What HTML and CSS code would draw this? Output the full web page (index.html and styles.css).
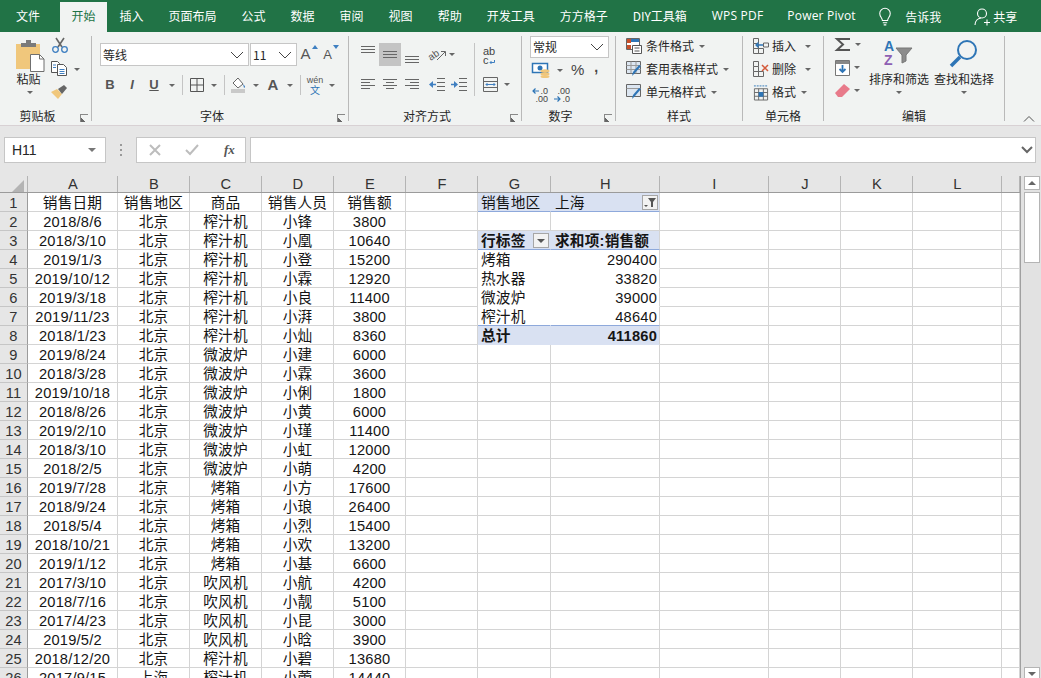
FILE: index.html
```html
<!DOCTYPE html>
<html lang="zh-CN">
<head>
<meta charset="utf-8">
<title>Excel</title>
<link rel="stylesheet" href="styles.css">
</head>
<body>
<header class="tabs">
  <span class="tab tab-file">文件</span>
  <span class="tab tab-on">开始</span>
  <span class="tab">插入</span>
  <span class="tab">页面布局</span>
  <span class="tab">公式</span>
  <span class="tab">数据</span>
  <span class="tab">审阅</span>
  <span class="tab">视图</span>
  <span class="tab">帮助</span>
  <span class="tab">开发工具</span>
  <span class="tab">方方格子</span>
  <span class="tab">DIY工具箱</span>
  <span class="tab tab-latin">WPS PDF</span>
  <span class="tab tab-latin">Power Pivot</span>
  <span class="tell">
    <svg width="14" height="20" viewBox="0 0 16 22" fill="none" stroke="#fff" stroke-width="1.2"><path d="M5 15c0-3-3-4-3-8a6 6 0 0 1 12 0c0 4-3 5-3 8z"/><path d="M5.500 17.500h5M6.500 20h3"/></svg>
    <span>告诉我</span>
  </span>
  <span class="share">
    <svg width="16" height="18" viewBox="0 0 16 18" fill="none" stroke="#fff" stroke-width="1.1"><circle cx="8" cy="5.500" r="4.500"/><path d="M1 17c0-4 3-6.500 6-7M10 14.500h6M13 11.500v6"/></svg>
    <span>共享</span>
  </span>
</header>

<section class="ribbon">
  <div class="group g-clip">
    <div class="body clip-body">
      <div class="paste">
        <svg width="30" height="32" viewBox="0 0 30 32"><rect x="1" y="4" width="24" height="25" fill="#f0c77c"/><path d="M6 7V3h5V0h5v3h5v4z" fill="#7a7a7a"/><path d="M15.500 14.500h9l4.500 4.500v12.500H15.500z" fill="#fff" stroke="#6f6f6f"/><path d="M24.500 14.500v4.500H29" fill="none" stroke="#6f6f6f"/></svg>
        <span class="txt">粘贴</span>
        <i class="caret paste-caret"></i>
      </div>
      <div class="clip-tools">
        <svg width="18" height="15" viewBox="0 0 18 15" fill="none"><path d="M5 0l6 9M13 0L7 9" stroke="#666" stroke-width="1.600"/><circle cx="4.500" cy="11.500" r="2.800" stroke="#3f7fc1" stroke-width="1.300"/><circle cx="13.500" cy="11.500" r="2.800" stroke="#3f7fc1" stroke-width="1.300"/></svg>
        <span class="row-ic">
          <svg width="16" height="15" viewBox="0 0 16 15" fill="none" stroke="#555"><path d="M.5.500h6l2 2v9H.5z" fill="#fff"/><path d="M6.500 3.500h6l3 3v8h-9z" fill="#fff"/><path d="M2 4h3M2 6.500h3M8.500 8.500h5M8.500 10.500h5M8.500 12.500h5" stroke="#3f7fc1"/></svg>
          <i class="caret copy-caret"></i>
        </span>
        <svg width="18" height="15" viewBox="0 0 18 15"><path d="M0 8l6-3 5 5-4 5z" fill="#f0c77c"/><path d="M7 5l6-4 3 3-5 6z" fill="#666"/></svg>
      </div>
    </div>
    <div class="label label-l">剪贴板</div>
    <i class="launch"></i>
  </div>

  <div class="group g-font">
    <div class="body pad-7">
      <div class="r r-font">
        <span class="combo combo-font"><span>等线</span><svg class="chev" width="14" height="8" viewBox="0 0 14 8" fill="none" stroke="#444"><path d="M1 1l6 6 6-6"/></svg></span>
        <span class="combo combo-size"><span>11</span><svg class="chev" width="14" height="8" viewBox="0 0 14 8" fill="none" stroke="#444"><path d="M1 1l6 6 6-6"/></svg></span>
        <span class="grow-a">A<svg width="6" height="4" viewBox="0 0 6 4"><path d="M0 4l3-4 3 4z" fill="#3f7fc1"/></svg></span>
        <span class="grow-a small">A<svg width="6" height="4" viewBox="0 0 6 4"><path d="M0 0l3 4 3-4z" fill="#3f7fc1"/></svg></span>
      </div>
      <div class="r r-fmt">
        <b class="t22 fmt">B</b><i class="t22 fmt fmt-i">I</i><u class="t22 fmt">U</u>
        <span class="cw13"><i class="caret"></i></span><i class="sep"></i>
        <span class="t22"><svg width="14" height="14" viewBox="0 0 14 14" fill="none" stroke="#555"><path d="M.5.500h13v13H.5zM7 .500v13M.5 7h13"/></svg></span>
        <span class="cw12"><i class="caret"></i></span><i class="sep"></i>
        <span class="t22"><svg width="18" height="18" viewBox="0 0 18 18"><rect x="1" y="13" width="14" height="4" fill="#c9c9c9"/><path d="M3 7l5-5 5 6-5 4z" fill="#fff" stroke="#666"/><path d="M13 8c2 2 3 3 1 4z" fill="#3f7fc1"/></svg></span>
        <span class="cw12"><i class="caret"></i></span>
        <span class="t22 color-a">A</span>
        <span class="cw12"><i class="caret"></i></span><i class="sep"></i>
        <span class="t22 wen"><small>wén</small><em>文</em></span>
        <span class="cw12"><i class="caret"></i></span>
      </div>
    </div>
    <div class="label label-l">字体</div>
    <i class="launch"></i>
  </div>

  <div class="group g-align">
    <div class="body pad-7 align-body">
      <div class="align-main">
        <div class="r r-a1">
          <span class="t22 at"><svg width="14" height="7" viewBox="0 0 14 7" stroke="#666"><path d="M0 .500h14M0 3.500h14M0 6.500h14"/></svg></span>
          <span class="t22 ac sel"><svg width="14" height="7" viewBox="0 0 14 7" stroke="#666"><path d="M0 .500h14M0 3.500h14M0 6.500h14"/></svg></span>
          <span class="t22 ab"><svg width="14" height="7" viewBox="0 0 14 7" stroke="#666"><path d="M0 .500h14M0 3.500h14M0 6.500h14"/></svg></span>
          <span class="orient"><svg width="18" height="15" viewBox="0 0 18 15" fill="none" stroke="#555"><text class="orient-t" x="0" y="12" transform="rotate(-35 4 10)">ab</text><path d="M8 13l8-8M12 4.500h4.500V9" stroke="#666"/></svg><i class="caret"></i></span>
        </div>
        <div class="r r-a2">
          <span class="t22"><svg width="14" height="11" viewBox="0 0 14 11" stroke="#666"><path d="M0 .500h14M0 3.500h9M0 6.500h14M0 9.500h9"/></svg></span>
          <span class="t22"><svg width="14" height="11" viewBox="0 0 14 11" stroke="#666"><path d="M0 .500h14M3 3.500h8M0 6.500h14M3 9.500h8"/></svg></span>
          <span class="t22"><svg width="14" height="11" viewBox="0 0 14 11" stroke="#666"><path d="M0 .500h14M5 3.500h9M0 6.500h14M5 9.500h9"/></svg></span>
          <span class="indent"><svg width="16" height="13" viewBox="0 0 16 13" fill="none"><path d="M0 6.500l4-3.500v7z" fill="#3f7fc1"/><path d="M4 6.500h3" stroke="#3f7fc1" stroke-width="1.500"/><path d="M8 .500h8M8 4.500h8M8 8.500h8M8 12.500h8" stroke="#666"/></svg></span>
          <span class="indent"><svg width="16" height="13" viewBox="0 0 16 13" fill="none"><path d="M7 6.500L3 3v7z" fill="#3f7fc1"/><path d="M0 6.500h3" stroke="#3f7fc1" stroke-width="1.500"/><path d="M8 .500h8M8 4.500h8M8 8.500h8M8 12.500h8" stroke="#666"/></svg></span>
        </div>
      </div>
      <i class="sep sep-tall"></i>
      <div class="align-side">
        <span class="wrap-ic"><span>ab</span><span>c<svg width="6" height="5" viewBox="0 0 6 5" fill="none" stroke="#3f7fc1"><path d="M5.500 0v2.500H1M2.500 1L1 2.500 2.500 4"/></svg></span></span>
        <span class="merge"><svg width="15" height="15" viewBox="0 0 15 15" fill="none" stroke="#666"><path d="M.5.500h14v14H.5zM.5 4.500h14M.5 10.500h14"/><path d="M3 7.500h9M4.500 6l-1.500 1.500L4.500 9M10.500 6L12 7.500 10.500 9" stroke="#3f7fc1"/></svg><i class="caret"></i></span>
      </div>
    </div>
    <div class="label label-l">对齐方式</div>
    <i class="launch"></i>
  </div>

  <div class="group g-num">
    <div class="body">
      <span class="combo combo-num"><span>常规</span><svg class="chev" width="14" height="8" viewBox="0 0 14 8" fill="none" stroke="#444"><path d="M1 1l6 6 6-6"/></svg></span>
      <div class="r r-n2">
        <svg width="18" height="15" viewBox="0 0 18 15"><rect x=".5" y=".5" width="15" height="9" fill="#fff" stroke="#2e75b6" stroke-width="1.500"/><circle cx="8" cy="5" r="2.500" fill="#2e75b6"/><ellipse cx="13" cy="8" rx="4.500" ry="1.700" fill="#f0c77c"/><ellipse cx="13" cy="11" rx="4.500" ry="1.700" fill="#f0c77c"/><ellipse cx="13" cy="13.500" rx="4.500" ry="1.500" fill="#f0c77c"/></svg>
        <i class="caret n-caret"></i>
        <span class="pct">%</span>
        <span class="comma">,</span>
      </div>
      <div class="r r-n3">
        <span class="dec"><span><svg width="7" height="6" viewBox="0 0 7 6" fill="none" stroke="#2e75b6" stroke-width="1.200"><path d="M7 3H1M3.500.500L1 3l2.500 2.500"/></svg>.0</span><span>.00</span></span>
        <span class="dec"><span>.00</span><span><svg width="7" height="6" viewBox="0 0 7 6" fill="none" stroke="#2e75b6" stroke-width="1.200"><path d="M0 3h6M3.500.500L6 3 3.500 5.500"/></svg>.0</span></span>
      </div>
    </div>
    <div class="label label-l">数字</div>
    <i class="launch"></i>
  </div>

  <div class="group g-style">
    <div class="body stack">
      <div class="line"><svg width="16" height="16" viewBox="0 0 16 16"><path d="M.5.500h13v11H.5z" fill="#fff" stroke="#666"/><rect x="1" y="1" width="4" height="4" fill="#c8502b"/><rect x="5" y="1" width="8" height="3" fill="#2e75b6"/><rect x="1" y="7" width="4" height="4" fill="#c8502b"/><path d="M6.500 7.500h9v8h-9z" fill="#fff" stroke="#555"/><path d="M8.500 10h5M8.500 13h5" stroke="#555"/></svg><span>条件格式</span><i class="caret"></i></div>
      <div class="line"><svg width="16" height="16" viewBox="0 0 16 16"><path d="M.5.500h14v12H.5z" fill="#dce6f1" stroke="#666"/><path d="M.5 4.500h14M.5 8.500h14M5 .5v12M10 .5v12" stroke="#999"/><path d="M15 5l-6 7-3 3 1-4 6-7z" fill="#2e75b6"/></svg><span>套用表格样式</span><i class="caret"></i></div>
      <div class="line"><svg width="16" height="16" viewBox="0 0 16 16"><path d="M.5.500h14v12H.5z" fill="#dce6f1" stroke="#666"/><path d="M.5 4.500h14" stroke="#999"/><path d="M15 5l-6 7-3 3 1-4 6-7z" fill="#2e75b6"/></svg><span>单元格样式</span><i class="caret"></i></div>
    </div>
    <div class="label">样式</div>
  </div>

  <div class="group g-cells">
    <div class="body stack">
      <div class="line"><svg width="16" height="16" viewBox="0 0 16 16" fill="none" stroke="#666"><path d="M.5.500h5v5h-5zM.5 5.500v5h5v-5M.5 10.500v5h5v-5M5.500 10.500h5v5h-5zM10.500 5h5v4h-5z"/><path d="M3 7h7M5.500 4.500L3 7l2.500 2.500" stroke="#2e75b6" stroke-width="1.300"/></svg><span>插入</span><i class="caret gap-caret"></i></div>
      <div class="line"><svg width="16" height="16" viewBox="0 0 16 16" fill="none" stroke="#666"><path d="M.5.500h5v5h-5zM.5 5.500v5h5v-5M.5 10.500v5h5v-5M5.500 10.500h5v5h-5z"/><path d="M9 4l6 6M15 4l-6 6" stroke="#d4593a" stroke-width="1.500"/></svg><span>删除</span><i class="caret gap-caret"></i></div>
      <div class="line"><svg width="16" height="17" viewBox="0 0 17 17" fill="none" stroke="#666"><path d="M1.500 4.500h14v12h-14zM1.500 8.500h14M1.500 12.500h14M6 4.500v12M11 4.500v12"/><path d="M1 1.500h15" stroke="#2e75b6" stroke-dasharray="2 1"/><rect x="6" y="8" width="5" height="5" fill="#2e75b6" stroke="none"/></svg><span>格式</span><i class="caret"></i></div>
    </div>
    <div class="label">单元格</div>
  </div>

  <div class="group g-edit">
    <div class="body edit-body">
      <div class="edit-tools">
        <div class="row-ic"><svg width="16" height="15" viewBox="0 0 16 15" fill="none" stroke="#555" stroke-width="2"><path d="M15 2H2l6 5.500L2 13h13"/></svg><i class="caret"></i></div>
        <div class="row-ic"><svg width="15" height="16" viewBox="0 0 15 16"><path d="M.5.500h14v15H.5z" fill="#fff" stroke="#777"/><rect x="1" y="1" width="13" height="3" fill="#888"/><path d="M7.500 5v7M4.500 9l3 3 3-3" fill="none" stroke="#2e75b6" stroke-width="1.800"/></svg><i class="caret"></i></div>
        <div class="row-ic"><svg width="15" height="14" viewBox="0 0 15 14"><path d="M0 9l9-9 6 5-8 8H3z" fill="#e87a8a"/></svg><i class="caret"></i></div>
      </div>
      <div class="big">
        <svg width="32" height="28" viewBox="0 0 32 28"><text class="az az-a" x="1" y="12">A</text><text class="az az-z" x="1" y="26">Z</text><path d="M13 9h16l-6 7v6l-4 2v-8z" fill="#8c8c8c" stroke="#777"/></svg>
        <span class="txt">排序和筛选</span>
        <i class="caret"></i>
      </div>
      <div class="big">
        <svg width="32" height="28" viewBox="0 0 32 28" fill="none"><circle cx="19" cy="11" r="9" stroke="#2e75b6" stroke-width="2"/><path d="M12 18L3 27" stroke="#2e75b6" stroke-width="3.500"/></svg>
        <span class="txt">查找和选择</span>
        <i class="caret"></i>
      </div>
    </div>
    <div class="label">编辑</div>
  </div>
  <div class="collapse"><svg width="10" height="6" viewBox="0 0 10 6" fill="none" stroke="#555"><path d="M0 5.500l5-5 5 5"/></svg></div>
</section>

<section class="fbar">
  <div class="namebox"><span>H11</span><i class="caret dark"></i></div>
  <div class="fdots"><i></i><i></i><i></i></div>
  <div class="fbtns">
    <svg width="12" height="12" viewBox="0 0 12 12" stroke="#bdbdbd" stroke-width="2"><path d="M1 1l10 10M11 1L1 11"/></svg>
    <svg width="14" height="12" viewBox="0 0 14 12" fill="none" stroke="#bdbdbd" stroke-width="2"><path d="M1 6l4 4 8-9"/></svg>
    <span class="fx">fx</span>
  </div>
  <div class="finput"><svg width="12" height="8" viewBox="0 0 12 8" fill="none" stroke="#666" stroke-width="2"><path d="M1 1l5 5 5-5"/></svg></div>
</section>

<main class="sheetarea">
  <div class="sheet">
    <table class="grid">
      <colgroup><col class="w-rh"><col class="w-a"><col class="w-s"><col class="w-s"><col class="w-s"><col class="w-s"><col class="w-s"><col class="w-g"><col class="w-h"><col class="w-h"><col class="w-s"><col class="w-s"><col class="w-l"><col class="w-m"></colgroup>
      <thead>
        <tr><th class="corner"><svg width="12" height="12" viewBox="0 0 12 12"><path d="M12 0v12H0z" fill="#b4b4b4"/></svg></th><th>A</th><th>B</th><th>C</th><th>D</th><th>E</th><th>F</th><th>G</th><th>H</th><th>I</th><th>J</th><th>K</th><th>L</th><th></th></tr>
      </thead>
      <tbody>
        <tr><th>1</th><td>销售日期</td><td>销售地区</td><td>商品</td><td>销售人员</td><td>销售额</td><td></td><td class="pv pv-head pl">销售地区</td><td class="pv pv-head pl h"><span>上海</span><span class="pv-btn btn-filter"><svg width="12" height="9" viewBox="0 0 12 9"><path d="M0 7h4L2 9zM4 0h8L9 4v5H7V4z" fill="#555"/></svg></span></td><td></td><td></td><td></td><td></td><td></td></tr>
        <tr><th>2</th><td>2018/8/6</td><td>北京</td><td>榨汁机</td><td>小锋</td><td>3800</td><td></td><td></td><td></td><td></td><td></td><td></td><td></td><td></td></tr>
        <tr><th>3</th><td>2018/3/10</td><td>北京</td><td>榨汁机</td><td>小凰</td><td>10640</td><td></td><td class="pv pv-head pl strong g3">行标签<span class="pv-btn btn-drop"><svg width="8" height="4" viewBox="0 0 8 4"><path d="M0 0h8L4 4z" fill="#555"/></svg></span></td><td class="pv pv-head pl strong">求和项:销售额</td><td></td><td></td><td></td><td></td><td></td></tr>
        <tr><th>4</th><td>2019/1/3</td><td>北京</td><td>榨汁机</td><td>小登</td><td>15200</td><td></td><td class="pb pl">烤箱</td><td class="pb pr">290400</td><td></td><td></td><td></td><td></td><td></td></tr>
        <tr><th>5</th><td>2019/10/12</td><td>北京</td><td>榨汁机</td><td>小霖</td><td>12920</td><td></td><td class="pb pl">热水器</td><td class="pb pr">33820</td><td></td><td></td><td></td><td></td><td></td></tr>
        <tr><th>6</th><td>2019/3/18</td><td>北京</td><td>榨汁机</td><td>小良</td><td>11400</td><td></td><td class="pb pl">微波炉</td><td class="pb pr">39000</td><td></td><td></td><td></td><td></td><td></td></tr>
        <tr><th>7</th><td>2019/11/23</td><td>北京</td><td>榨汁机</td><td>小湃</td><td>3800</td><td></td><td class="pb pl pb-last">榨汁机</td><td class="pb pr pb-last">48640</td><td></td><td></td><td></td><td></td><td></td></tr>
        <tr><th>8</th><td>2018/1/23</td><td>北京</td><td>榨汁机</td><td>小灿</td><td>8360</td><td></td><td class="pv pv-total pl strong">总计</td><td class="pv pv-total pr strong">411860</td><td></td><td></td><td></td><td></td><td></td></tr>
        <tr><th>9</th><td>2019/8/24</td><td>北京</td><td>微波炉</td><td>小建</td><td>6000</td><td></td><td></td><td></td><td></td><td></td><td></td><td></td><td></td></tr>
        <tr><th>10</th><td>2018/3/28</td><td>北京</td><td>微波炉</td><td>小霖</td><td>3600</td><td></td><td></td><td></td><td></td><td></td><td></td><td></td><td></td></tr>
        <tr><th>11</th><td>2019/10/18</td><td>北京</td><td>微波炉</td><td>小俐</td><td>1800</td><td></td><td></td><td></td><td></td><td></td><td></td><td></td><td></td></tr>
        <tr><th>12</th><td>2018/8/26</td><td>北京</td><td>微波炉</td><td>小黄</td><td>6000</td><td></td><td></td><td></td><td></td><td></td><td></td><td></td><td></td></tr>
        <tr><th>13</th><td>2019/2/10</td><td>北京</td><td>微波炉</td><td>小瑾</td><td>11400</td><td></td><td></td><td></td><td></td><td></td><td></td><td></td><td></td></tr>
        <tr><th>14</th><td>2018/3/10</td><td>北京</td><td>微波炉</td><td>小虹</td><td>12000</td><td></td><td></td><td></td><td></td><td></td><td></td><td></td><td></td></tr>
        <tr><th>15</th><td>2018/2/5</td><td>北京</td><td>微波炉</td><td>小萌</td><td>4200</td><td></td><td></td><td></td><td></td><td></td><td></td><td></td><td></td></tr>
        <tr><th>16</th><td>2019/7/28</td><td>北京</td><td>烤箱</td><td>小方</td><td>17600</td><td></td><td></td><td></td><td></td><td></td><td></td><td></td><td></td></tr>
        <tr><th>17</th><td>2018/9/24</td><td>北京</td><td>烤箱</td><td>小琅</td><td>26400</td><td></td><td></td><td></td><td></td><td></td><td></td><td></td><td></td></tr>
        <tr><th>18</th><td>2018/5/4</td><td>北京</td><td>烤箱</td><td>小烈</td><td>15400</td><td></td><td></td><td></td><td></td><td></td><td></td><td></td><td></td></tr>
        <tr><th>19</th><td>2018/10/21</td><td>北京</td><td>烤箱</td><td>小欢</td><td>13200</td><td></td><td></td><td></td><td></td><td></td><td></td><td></td><td></td></tr>
        <tr><th>20</th><td>2019/1/12</td><td>北京</td><td>烤箱</td><td>小基</td><td>6600</td><td></td><td></td><td></td><td></td><td></td><td></td><td></td><td></td></tr>
        <tr><th>21</th><td>2017/3/10</td><td>北京</td><td>吹风机</td><td>小航</td><td>4200</td><td></td><td></td><td></td><td></td><td></td><td></td><td></td><td></td></tr>
        <tr><th>22</th><td>2018/7/16</td><td>北京</td><td>吹风机</td><td>小靓</td><td>5100</td><td></td><td></td><td></td><td></td><td></td><td></td><td></td><td></td></tr>
        <tr><th>23</th><td>2017/4/23</td><td>北京</td><td>吹风机</td><td>小昆</td><td>3000</td><td></td><td></td><td></td><td></td><td></td><td></td><td></td><td></td></tr>
        <tr><th>24</th><td>2019/5/2</td><td>北京</td><td>吹风机</td><td>小晗</td><td>3900</td><td></td><td></td><td></td><td></td><td></td><td></td><td></td><td></td></tr>
        <tr><th>25</th><td>2018/12/20</td><td>北京</td><td>榨汁机</td><td>小碧</td><td>13680</td><td></td><td></td><td></td><td></td><td></td><td></td><td></td><td></td></tr>
        <tr><th>26</th><td>2017/9/15</td><td>上海</td><td>榨汁机</td><td>小蕾</td><td>14440</td><td></td><td></td><td></td><td></td><td></td><td></td><td></td><td></td></tr>
      </tbody>
    </table>
  </div>
  <aside class="vscroll">
    <div class="sb-btn"><svg width="8" height="4" viewBox="0 0 8 4"><path d="M0 4l4-4 4 4z" fill="#666"/></svg></div>
    <div class="sb-thumb"></div>
    <div class="sb-track"></div>
    <div class="sb-btn sb-down"><svg width="8" height="4" viewBox="0 0 8 4"><path d="M0 0l4 4 4-4z" fill="#666"/></svg></div>
  </aside>
</main>
</body>
</html>
```

FILE: styles.css
```css
* { box-sizing: border-box; }
html, body { margin: 0; height: 678px; overflow: hidden; }
body {
  width: 1041px;
  display: flex;
  flex-direction: column;
  background: #e6e6e6;
  color: #262626;
  font: 12px/16px "Noto Sans CJK SC", "Liberation Sans", sans-serif;
}
i, em { font-style: normal; }
svg { display: block; flex: none; overflow: visible; }

/* title tabs */
.tabs {
  height: 32px;
  flex: none;
  display: flex;
  align-items: flex-end;
  background: #217346;
  color: #fff;
  padding-left: 4px;
}
.tab { height: 30px; line-height: 28px; padding: 0 12.5px; white-space: nowrap; }
.tab-file { padding: 0 12px; margin-right: 8px; }
.tab-on { background: #f1f3f2; color: #217346; padding: 0 11.500px; }
.tab-latin { font-family: "Open Sans", "Liberation Sans", sans-serif; letter-spacing: .2px; padding: 0 11.500px; margin-left: 1px; }
.tab-latin:first-of-type { margin-left: 1px; }
.tell, .share { display: flex; align-items: center; height: 30px; }
.tell { margin-left: 11px; gap: 13px; }
.share { margin-left: 33px; gap: 3px; }

/* ribbon */
.ribbon {
  height: 94px;
  flex: none;
  display: flex;
  background: #f1f3f2;
  border-bottom: 1px solid #d8d1d4;
  position: relative;
}
.group {
  flex: none;
  height: 85px;
  margin-top: 4px;
  display: flex;
  flex-direction: column;
  position: relative;
  border-right: 1px solid #b9b9b9;
}
.g-clip { width: 92px; }
.g-font { width: 257px; }
.g-align { width: 173px; }
.g-num { width: 94px; }
.g-style { width: 127px; }
.g-cells { width: 81px; }
.g-edit { width: 181px; }
.body { flex: 1; min-height: 0; }
.pad-7 { padding-top: 7px; }
.label { height: 16px; line-height: 16px; margin-bottom: -3px; text-align: center; flex: none; }
.label-l { padding-right: 16px; }
.launch {
  position: absolute;
  right: 3px;
  bottom: -1px;
  width: 8px;
  height: 8px;
  border-left: 1px solid #888;
  border-top: 1px solid #888;
  background: linear-gradient(45deg, #666 0 30%, transparent 30%);
}
.caret {
  display: block;
  width: 0;
  height: 0;
  flex: none;
  border-top: 3px solid #666;
  border-left: 3px solid transparent;
  border-right: 3px solid transparent;
}
.caret.dark { border-top-width: 4px; border-left-width: 4px; border-right-width: 4px; border-top-color: #777; }
.r { display: flex; align-items: center; }
.sep { display: block; width: 1px; height: 20px; background: #c4c4c4; flex: none; }
.t22 { width: 22px; height: 20px; display: flex; align-items: center; justify-content: center; flex: none; }
.cw13 { width: 13px; display: flex; justify-content: center; flex: none; }
.cw12 { width: 12px; display: flex; justify-content: center; flex: none; }

/* clipboard */
.clip-body { display: flex; padding-left: 15px; }
.paste { width: 30px; display: flex; flex-direction: column; align-items: center; padding-top: 4px; }
.paste .txt { white-space: nowrap; margin-top: -1px; margin-left: -3px; line-height: 15px; }
.paste-caret { margin-top: 5px; }
.clip-tools { display: flex; flex-direction: column; gap: 8px; margin-left: 6px; padding-top: 2px; }
.row-ic { display: flex; align-items: center; gap: 3px; }
.copy-caret { margin-left: 4px; margin-top: 2px; }

/* font */
.r-font { padding-left: 8px; height: 23px; align-items: flex-start; }
.combo {
  height: 23px;
  background: #fff;
  border: 1px solid #c6c6c6;
  display: flex;
  align-items: center;
  justify-content: space-between;
  padding: 0 2px 0 2px;
  flex: none;
}
.combo-font { width: 149px; }
.combo-size { width: 47px; margin-left: 1px; }
.combo-num { width: 79px; height: 22px; margin-left: 8px; }
.chev { margin-right: 2px; }
.grow-a {
  width: 22px;
  display: flex;
  justify-content: center;
  gap: 1px;
  font: 15px/22px "Liberation Sans", sans-serif;
  color: #555;
  margin-left: 1px;
}
.grow-a svg { margin-top: 2px; }
.grow-a.small { font-size: 13px; line-height: 23px; margin-left: 0; }
.r-fmt { margin-top: 9px; padding-left: 7px; height: 20px; }
.fmt { font: bold 13px/20px "Liberation Sans", sans-serif; color: #555; }
.fmt-i { font-style: italic; }
.r-fmt .sep { margin: 0 3px 0 4px; }
.color-a { font: bold 15px/20px "Liberation Sans", sans-serif; color: #555; }
.wen { flex-direction: column; }
.wen small { font: 9px/10px "Liberation Sans", sans-serif; color: #555; }
.wen em { font-size: 10px; line-height: 10px; color: #2e75b6; }

/* alignment */
.align-body { display: flex; padding-left: 8px; }
.r-a1 { height: 23px; }
.r-a2 { height: 23px; margin-top: 7px; }
.t22.sel { background: #c4c4c4; height: 23px; }
.r-a1 .t22 { height: 23px; }
.at { align-items: flex-start; padding-top: 3px; }
.ab { align-items: flex-end; padding-bottom: 3px; }
.orient { display: flex; align-items: center; gap: 2px; margin-left: 6px; }
.orient-t { font: 10px "Liberation Sans", sans-serif; fill: #555; stroke: none; }
.indent { width: 22px; display: flex; justify-content: center; margin-left: 3px; margin-right: -3px; }
.sep-tall { height: 53px; margin-left: 7px; }
.align-side { display: flex; flex-direction: column; padding-left: 8px; }
.wrap-ic { display: flex; flex-direction: column; font: 11px/9px "Liberation Sans", sans-serif; color: #444; padding-top: 4px; height: 34px; }
.wrap-ic span { display: flex; align-items: flex-end; }
.merge { display: flex; align-items: center; gap: 6px; }

/* number */
.g-num .body { display: flex; flex-direction: column; }
.r-n2 { height: 18px; padding-left: 10px; margin-top: 3px; }
.n-caret { margin-left: 7px; }
.pct { font: 15px/18px "Liberation Sans", sans-serif; color: #444; margin-left: 8px; }
.comma { font: bold 14px/14px "Liberation Sans", sans-serif; color: #444; margin-left: 10px; margin-top: -6px; }
.r-n3 { height: 16px; margin-top: 8px; padding-left: 11px; gap: 7px; }
.dec { width: 15px; font: 9px/8px "Liberation Sans", sans-serif; color: #444; display: flex; flex-direction: column; align-items: flex-end; }
.dec span { display: flex; align-items: center; gap: 1px; }

/* styles + cells */
.stack { margin-top: -1.500px; padding-left: 10px; }
.line { height: 23px; display: flex; align-items: center; white-space: nowrap; }
.line > svg { margin-right: 3px; }
.g-style .line > svg { margin-right: 4px; }
.line .caret { margin-left: 5px; }
.g-cells .gap-caret { margin-left: 9px; }

/* editing */
.edit-body { display: flex; padding-left: 11px; }
.edit-tools { width: 34px; display: flex; flex-direction: column; padding-top: 1px; gap: 8px; }
.edit-tools .row-ic { height: 15px; gap: 4px; }
.big { width: 60px; margin-right: 5px; display: flex; flex-direction: column; align-items: center; white-space: nowrap; padding-top: 3px; }
.big .txt { line-height: 15px; margin-top: 4px; }
.big .caret { margin-top: 5px; }
.az { font: bold 14px "Liberation Sans", sans-serif; }
.az-a { fill: #2e75b6; }
.az-z { fill: #8e5fb3; }
.collapse { position: absolute; right: 7px; bottom: 3px; }

/* formula bar */
.fbar { height: 50px; flex: none; display: flex; padding: 11px 5px 13px 4px; }
.namebox {
  width: 102px;
  background: #fff;
  border: 1px solid #c6c6c6;
  display: flex;
  align-items: center;
  justify-content: space-between;
  padding: 0 9px 0 7px;
  font: 14px/16px "Liberation Sans", sans-serif;
}
.fdots { width: 30px; display: flex; flex-direction: column; align-items: center; justify-content: center; gap: 3px; }
.fdots i { width: 2px; height: 2px; background: #999; }
.fbtns {
  width: 110px;
  background: #fff;
  border: 1px solid #c6c6c6;
  display: flex;
  align-items: center;
  padding-left: 12px;
  gap: 24px;
}
.fx { font: italic bold 13px/16px "Liberation Serif", serif; color: #555; margin-left: 1px; }
.finput {
  flex: 1;
  margin-left: 4px;
  background: #fff;
  border: 1px solid #c6c6c6;
  display: flex;
  align-items: center;
  justify-content: flex-end;
  padding-right: 2px;
}

/* sheet */
.sheetarea { flex: 1; min-height: 0; display: flex; }
.sheet { width: 1021px; flex: none; overflow: hidden; border-right: 1px solid #a0a0a0; }
.grid {
  table-layout: fixed;
  width: 1020px;
  border-collapse: separate;
  border-spacing: 0;
  background: #fff;
  color: #151515;
  font: 14.67px/15px "Liberation Sans", "Noto Sans CJK SC", sans-serif;
  letter-spacing: .2px;
}
.w-rh { width: 28px; }
.w-a { width: 90px; }
.w-s { width: 72px; }
.w-g { width: 73px; }
.w-h { width: 109px; }
.w-l { width: 89px; }
.w-m { width: 18px; }
.grid td, .grid tbody th {
  height: 19px;
  padding: 3px 0 0;
  border-right: 1px solid #d4d4d4;
  border-bottom: 1px solid #d4d4d4;
  text-align: center;
  white-space: nowrap;
  overflow: hidden;
  font-weight: 400;
}
.grid thead th {
  height: 17px;
  padding: 1px 0 0;
  background: #e6e6e6;
  border-bottom: 1px solid #9b9b9b;
  box-shadow: inset -1px 0 0 #b4b4b4;
  font: 14.67px/15px "Liberation Sans", sans-serif;
  color: #333;
  overflow: hidden;
}
.corner svg { margin: 2px 0 0 12px; }
.grid tbody th {
  background: #e6e6e6;
  border-right-color: #9b9b9b;
  border-bottom-color: #c6c6c6;
  color: #333;
}
.grid td.pl { text-align: left; padding-left: 3px; }
.grid td.pr { text-align: right; padding-right: 2px; }
.grid td.pv { background: #d9e1f2; border-right-color: #d9e1f2; border-bottom-color: #8ea9db; }
.grid td.pv:nth-child(9) { border-right-color: #d4d4d4; }
.grid td.pv-total { border-bottom-color: #d9e1f2; }
.grid td.pb { border-bottom-color: #fff; border-right-color: #fff; }
.grid td.pb:nth-child(9) { border-right-color: #d4d4d4; }
.grid td.pb-last { border-bottom-color: #8ea9db; }
.grid td.strong { font-weight: 700; }
.grid td.h { padding-left: 4px; position: relative; }
.grid td.strong:nth-child(9) { padding-left: 4px; }
.grid td.pv-total.pr:nth-child(9) { padding-left: 0; }
.pv-btn {
  position: absolute;
  width: 16px;
  height: 15px;
  background: #f2f2f2;
  border: 1px solid #a6a6a6;
  display: flex;
  align-items: center;
  justify-content: center;
}
.g3 { position: relative; }
.btn-filter { right: 1px; top: 2px; }
.btn-drop { right: 1px; top: 2px; }

/* scrollbar */
.vscroll { flex: 1; display: flex; flex-direction: column; background: #e2e2e2; padding: 0 1px 0 3px; }
.sb-btn {
  height: 14px;
  flex: none;
  background: #fff;
  border: 1px solid #b4b4b4;
  display: flex;
  align-items: center;
  justify-content: center;
}
.sb-thumb { height: 71px; margin-top: 2px; flex: none; background: #fff; border: 1px solid #b4b4b4; }
.sb-track { flex: 1; }
.sb-down { margin-bottom: -3px; }
```
